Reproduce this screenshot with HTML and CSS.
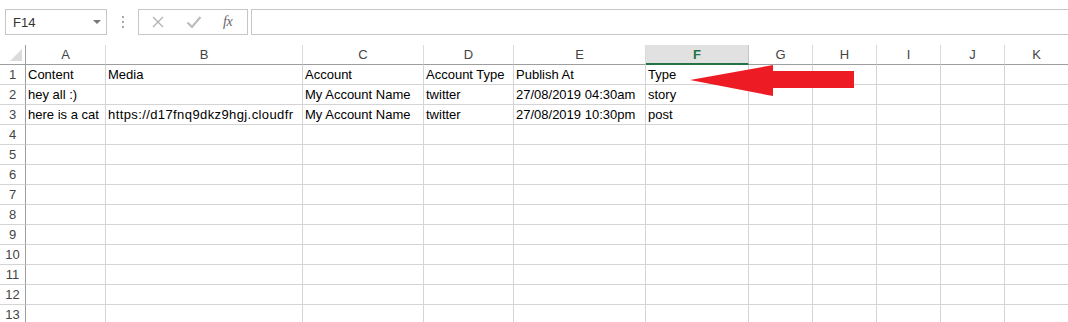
FILE: index.html
```html
<!DOCTYPE html>
<html>
<head>
<meta charset="utf-8">
<link rel="stylesheet" href="styles.css">
</head>
<body>
<div class="app">
  <div class="toolbar">
    <div class="namebox"><span class="ref">F14</span><span class="caret"></span></div>
    <div class="grip"><span></span><span></span><span></span></div>
    <div class="fbtns">
      <svg class="ico" width="14" height="14" viewBox="0 0 14 14"><path d="M2 2 L12 12 M12 2 L2 12" stroke="#b4b4b4" stroke-width="1.4" fill="none"/></svg>
      <svg class="ico" width="16" height="14" viewBox="0 0 16 14"><path d="M1.5 7.5 L6 12 L14.5 2" stroke="#bcbcbc" stroke-width="2.2" fill="none"/></svg>
      <span class="fx">fx</span>
    </div>
    <div class="finput"></div>
  </div>
  <div class="sheet">
    <div class="row head">
      <div class="c rh corner"><span class="tri"></span></div>
      <div class="c">A</div><div class="c">B</div><div class="c">C</div><div class="c">D</div><div class="c">E</div><div class="c sel">F</div><div class="c">G</div><div class="c">H</div><div class="c">I</div><div class="c">J</div><div class="c">K</div>
    </div>
    <div class="row">
      <div class="c rh">1</div>
      <div class="c">Content</div><div class="c">Media</div><div class="c">Account</div><div class="c">Account Type</div><div class="c">Publish At</div><div class="c">Type</div><div class="c"></div><div class="c"></div><div class="c"></div><div class="c"></div><div class="c"></div>
    </div>
    <div class="row">
      <div class="c rh">2</div>
      <div class="c">hey all :)</div><div class="c"></div><div class="c">My Account Name</div><div class="c">twitter</div><div class="c">27/08/2019 04:30am</div><div class="c">story</div><div class="c"></div><div class="c"></div><div class="c"></div><div class="c"></div><div class="c"></div>
    </div>
    <div class="row">
      <div class="c rh">3</div>
      <div class="c">here is a cat</div><div class="c url">https://d17fnq9dkz9hgj.cloudfr</div><div class="c">My Account Name</div><div class="c">twitter</div><div class="c">27/08/2019 10:30pm</div><div class="c">post</div><div class="c"></div><div class="c"></div><div class="c"></div><div class="c"></div><div class="c"></div>
    </div>
    <div class="row"><div class="c rh">4</div><div class="c"></div><div class="c"></div><div class="c"></div><div class="c"></div><div class="c"></div><div class="c"></div><div class="c"></div><div class="c"></div><div class="c"></div><div class="c"></div><div class="c"></div></div>
    <div class="row"><div class="c rh">5</div><div class="c"></div><div class="c"></div><div class="c"></div><div class="c"></div><div class="c"></div><div class="c"></div><div class="c"></div><div class="c"></div><div class="c"></div><div class="c"></div><div class="c"></div></div>
    <div class="row"><div class="c rh">6</div><div class="c"></div><div class="c"></div><div class="c"></div><div class="c"></div><div class="c"></div><div class="c"></div><div class="c"></div><div class="c"></div><div class="c"></div><div class="c"></div><div class="c"></div></div>
    <div class="row"><div class="c rh">7</div><div class="c"></div><div class="c"></div><div class="c"></div><div class="c"></div><div class="c"></div><div class="c"></div><div class="c"></div><div class="c"></div><div class="c"></div><div class="c"></div><div class="c"></div></div>
    <div class="row"><div class="c rh">8</div><div class="c"></div><div class="c"></div><div class="c"></div><div class="c"></div><div class="c"></div><div class="c"></div><div class="c"></div><div class="c"></div><div class="c"></div><div class="c"></div><div class="c"></div></div>
    <div class="row"><div class="c rh">9</div><div class="c"></div><div class="c"></div><div class="c"></div><div class="c"></div><div class="c"></div><div class="c"></div><div class="c"></div><div class="c"></div><div class="c"></div><div class="c"></div><div class="c"></div></div>
    <div class="row"><div class="c rh">10</div><div class="c"></div><div class="c"></div><div class="c"></div><div class="c"></div><div class="c"></div><div class="c"></div><div class="c"></div><div class="c"></div><div class="c"></div><div class="c"></div><div class="c"></div></div>
    <div class="row"><div class="c rh">11</div><div class="c"></div><div class="c"></div><div class="c"></div><div class="c"></div><div class="c"></div><div class="c"></div><div class="c"></div><div class="c"></div><div class="c"></div><div class="c"></div><div class="c"></div></div>
    <div class="row"><div class="c rh">12</div><div class="c"></div><div class="c"></div><div class="c"></div><div class="c"></div><div class="c"></div><div class="c"></div><div class="c"></div><div class="c"></div><div class="c"></div><div class="c"></div><div class="c"></div></div>
    <div class="row"><div class="c rh">13</div><div class="c"></div><div class="c"></div><div class="c"></div><div class="c"></div><div class="c"></div><div class="c"></div><div class="c"></div><div class="c"></div><div class="c"></div><div class="c"></div><div class="c"></div></div>
    <svg class="arrow" width="180" height="40" viewBox="0 0 180 40"><polygon points="0,15 83,0 83,6 164,6 164,23 83,23 83,31" fill="#ed1c24"/></svg>
  </div>
</div>
</body>
</html>
```
FILE: styles.css
```css
html, body {
  margin: 0;
  padding: 0;
  background: #fff;
}
body {
  font-family: "Liberation Sans", Arial, sans-serif;
  overflow: hidden;
}
.app {
  width: 1068px;
  height: 322px;
  overflow: hidden;
}
.toolbar {
  display: flex;
  align-items: stretch;
  height: 26px;
  padding: 9px 0 10px 5px;
}
.namebox {
  box-sizing: border-box;
  width: 102px;
  border: 1px solid #c6c6c6;
  display: flex;
  align-items: center;
  justify-content: space-between;
  padding: 0 5px 0 7px;
}
.ref {
  font-size: 13px;
  color: #333;
}
.caret {
  width: 0;
  height: 0;
  border-left: 4px solid transparent;
  border-right: 4px solid transparent;
  border-top: 4px solid #777;
}
.grip {
  width: 31px;
  display: flex;
  flex-direction: column;
  align-items: center;
  justify-content: center;
  gap: 3px;
}
.grip span {
  width: 2px;
  height: 2px;
  background: #a8a8a8;
}
.fbtns {
  box-sizing: border-box;
  width: 110px;
  border: 1px solid #c6c6c6;
  display: flex;
  align-items: center;
  padding-left: 12px;
}
.fbtns .ico:first-child {
  margin-right: 21px;
}
.fbtns .ico + .ico {
  margin-right: 21px;
}
.fx {
  font-family: "Liberation Serif", "Times New Roman", serif;
  font-style: italic;
  font-size: 14px;
  color: #666;
  letter-spacing: -0.5px;
}
.finput {
  flex: 1;
  margin-left: 3px;
  margin-right: -5px;
  border: 1px solid #c6c6c6;
}
.sheet {
  position: relative;
}
.row {
  display: grid;
  grid-template-columns: 26px 80px 197px 121px 90px 132px 103px 64px 64px 64px 64px 64px;
  height: 20px;
}
.c {
  box-sizing: border-box;
  height: 20px;
  border-right: 1px solid #d4d4d4;
  border-bottom: 1px solid #d4d4d4;
  font-size: 13px;
  line-height: 18px;
  padding: 1px 0 0 2px;
  color: #000;
  white-space: nowrap;
  overflow: hidden;
}
.url {
  letter-spacing: 0.4px;
}
.rh {
  border-right: 1px solid #9e9e9e;
  text-align: center;
  padding: 1px 0 0 0;
  color: #444;
}
.head .c {
  text-align: center;
  color: #444;
  border-right-color: #dadada;
  border-bottom-color: #9e9e9e;
  padding: 1px 0 0 0;
}
.head .corner {
  border-right-color: #9e9e9e;
  position: relative;
}
.tri {
  position: absolute;
  right: 3px;
  bottom: 3px;
  width: 0;
  height: 0;
  border-left: 12px solid transparent;
  border-bottom: 12px solid #dcdcdc;
}
.head .sel {
  background: #e1e1e1;
  color: #217346;
  font-weight: bold;
  border-bottom: 2px solid #217346;
  border-right-color: #c6c6c6;
}
.arrow {
  position: absolute;
  left: 690px;
  top: 20px;
}
```
